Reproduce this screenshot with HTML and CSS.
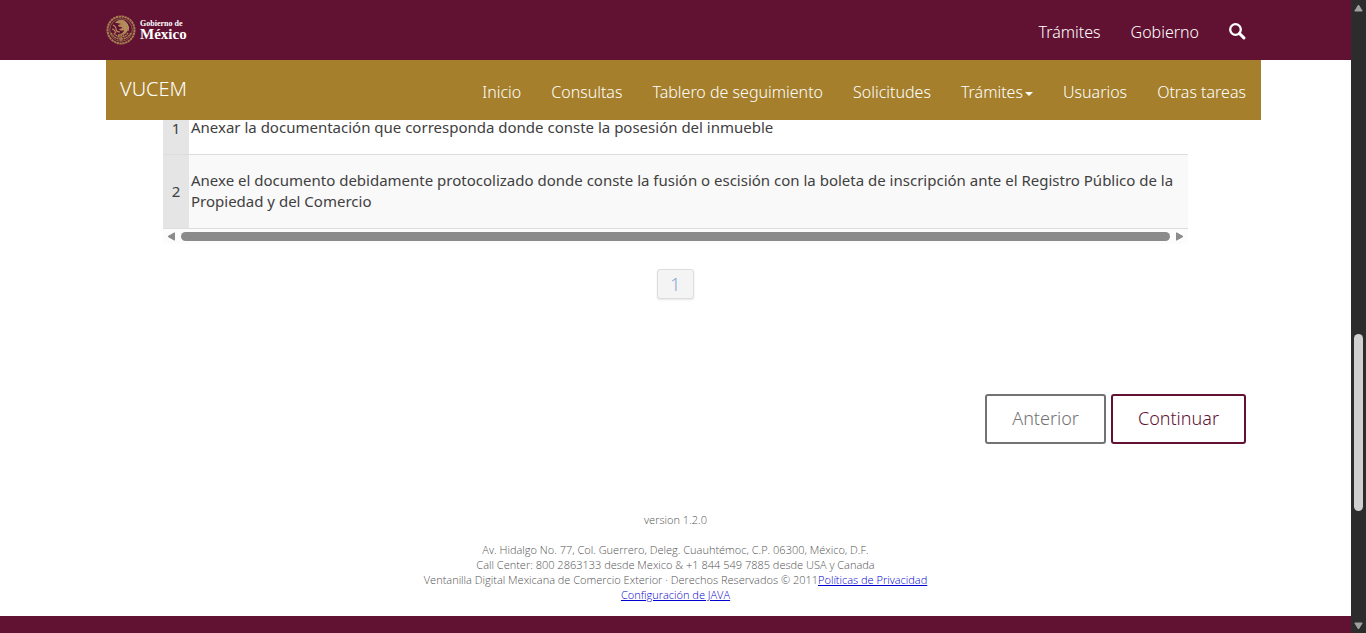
FILE: index.html
```html
<!DOCTYPE html>
<html lang="es">
<head>
<meta charset="utf-8">
<meta name="viewport" content="width=device-width, initial-scale=1">
<title>VUCEM</title>
<link rel="stylesheet" href="styles.css">
</head>
<body>
<div class="window">
  <div class="page">
    <header class="header">
      <div class="gov-bar shell">
        <div class="container gov-inner">
          <a class="logo" href="#" aria-label="Gobierno de México">
            <svg class="seal" viewBox="0 0 30 30" aria-hidden="true">
              <circle cx="15" cy="15" r="13.5" fill="none" stroke="#a57f4e" stroke-width="2" stroke-dasharray="2.4 .5"/>
              <circle cx="15" cy="15" r="11.3" fill="none" stroke="#8c6046" stroke-width="1"/>
              <path d="M9 8c3-4 9-4 11-1 3 3 3 8 0 11-2 2-5 2-7 1 3 0 5-2 5-4-2 1-4 1-5-1 2 0 3-1 3-2-2 0-4 0-4-2l3-1c-2-1-4-1-6-1z" fill="#b08a58"/>
              <path d="M7 10c2 1 3 2 3 4s2 3 4 3M6 14c2 0 3 2 4 4M20 8c2 2 3 5 2 8M17 7c2 2 3 5 2 9" fill="none" stroke="#b9925f" stroke-width="1.1"/>
              <path d="M5 18c3 5 7 6 10 6s7-1 10-6M8 18c2 3 5 4 7 4s5-1 7-4M12 20h6M15 19v7" fill="none" stroke="#a57f4e" stroke-width="1.5" stroke-dasharray="2 .5"/>
            </svg>
            <span class="wordmark"><span class="wordmark-top">Gobierno de</span><span class="wordmark-main">México</span></span>
          </a>
          <nav class="nav" aria-label="Gobierno">
            <a href="#">Trámites</a>
            <a href="#">Gobierno</a>
            <a class="search" href="#" aria-label="Buscar">
              <svg viewBox="0 0 17 17" aria-hidden="true"><circle cx="6.5" cy="6.5" r="5.3" fill="none" stroke="#fff" stroke-width="2.3"/><path d="M10.5 10.5l4.4 4.4" stroke="#fff" stroke-width="3" stroke-linecap="round"/></svg>
            </a>
          </nav>
        </div>
      </div>
      <div class="shell">
        <div class="container app-bar">
          <a class="brand" href="#">VUCEM</a>
          <nav class="nav" aria-label="VUCEM">
            <a href="#">Inicio</a>
            <a href="#">Consultas</a>
            <a href="#">Tablero de seguimiento</a>
            <a href="#">Solicitudes</a>
            <a href="#">Trámites<span class="caret"></span></a>
            <a href="#">Usuarios</a>
            <a href="#">Otras tareas</a>
          </nav>
        </div>
      </div>
    </header>

    <main class="shell content">
      <div class="container">
        <div class="grid">
          <table class="table">
            <tbody>
              <tr><th scope="row">1</th><td>Anexar la documentación que corresponda donde conste la posesión del inmueble</td></tr>
              <tr><th scope="row">2</th><td>Anexe el documento debidamente protocolizado donde conste la fusión o escisión con la boleta de inscripción ante el Registro Público de la Propiedad y del Comercio</td></tr>
            </tbody>
          </table>
          <div class="hscroll" aria-hidden="true">
            <svg class="arrow" viewBox="0 0 9 9"><path d="M7.5.8v7.4L1 4.5z" fill="#8b8b8b" stroke="#8b8b8b" stroke-linejoin="round"/></svg>
            <span class="hthumb"></span>
            <svg class="arrow" viewBox="0 0 9 9"><path d="M1.5.8v7.4L8 4.5z" fill="#8b8b8b" stroke="#8b8b8b" stroke-linejoin="round"/></svg>
          </div>
        </div>
        <div class="pager"><button class="page-button" type="button">1</button></div>
        <div class="actions">
          <button class="button" type="button">Anterior</button>
          <button class="button button-primary" type="button">Continuar</button>
        </div>
      </div>
    </main>

    <footer class="info">
      <p class="version">version 1.2.0</p>
      <p>Av. Hidalgo No. 77, Col. Guerrero, Deleg. Cuauhtémoc, C.P. 06300, México, D.F.<br>
      Call Center: 800 2863133 desde Mexico &amp; +1 844 549 7885 desde USA y Canada<br>
      Ventanilla Digital Mexicana de Comercio Exterior · Derechos Reservados © 2011<a href="#">Políticas de Privacidad</a><br>
      <a href="#">Configuración de JAVA</a></p>
    </footer>
    <div class="footer-band"></div>
  </div>
  <div class="vscroll" aria-hidden="true">
    <svg class="arrow" viewBox="0 0 9 9"><path d="M.8 7L4.5 1 8.2 7z" fill="#a0a0a0" stroke="#a0a0a0" stroke-linejoin="round"/></svg>
    <div class="vtrack"><span class="vthumb"></span></div>
    <svg class="arrow" viewBox="0 0 9 9"><path d="M.8 2L4.5 8 8.2 2z" fill="#a0a0a0" stroke="#a0a0a0" stroke-linejoin="round"/></svg>
  </div>
</div>
</body>
</html>
```

FILE: styles.css
```css
* { box-sizing: border-box; }

body {
  margin: 0;
  background: #fff;
  color: #404041;
  font-family: "Noto Sans", sans-serif;
  font-size: 15px;
}

.window {
  display: grid;
  grid-template-columns: minmax(0, 1fr) 15px;
  height: 100vh;
  overflow: hidden;
}

.page {
  display: flex;
  flex-direction: column;
  min-height: 100vh;
}

/* Balances the scrollbar so the container is centred in the window. */
.shell { padding-left: 16px; }

.container {
  max-width: 1155px;
  margin: 0 auto;
}

/* Header */
.header {
  position: relative;
  z-index: 1;
}

.gov-bar { background: #611232; }

.gov-inner,
.app-bar {
  display: flex;
  justify-content: space-between;
  height: 60px;
}

.logo {
  display: flex;
  align-items: center;
  gap: 4px;
  padding-bottom: 1px;
  color: #fff;
  text-decoration: none;
}

.seal {
  width: 30px;
  height: 30px;
}

.wordmark {
  display: flex;
  flex-direction: column;
  font-family: "Liberation Serif", serif;
  font-weight: 700;
}

.wordmark-top {
  font-size: 8px;
  line-height: 9px;
}

.wordmark-main {
  font-size: 15px;
  line-height: 12px;
}

.nav {
  display: flex;
  gap: 30px;
  padding: 20px 15px 0 0;
  font-size: 16px;
  font-weight: 300;
  line-height: 24px;
}

.nav a {
  color: #fff;
  text-decoration: none;
}

.search svg {
  display: block;
  width: 17px;
  height: 17px;
  margin-top: 3px;
}

.app-bar { background: #a57f2c; }

.brand {
  padding: 15px 14px;
  color: #fff;
  font-size: 20px;
  font-weight: 300;
  line-height: 28px;
  text-decoration: none;
}

.caret {
  display: inline-block;
  margin-left: 2px;
  border: 4px solid transparent;
  border-top-color: #fff;
  border-bottom: 0;
  vertical-align: middle;
}

/* Content, scrolled partly under the header */
.content { margin-top: -18px; }

.grid { margin: 0 73px 0 57px; }

.table {
  width: 100%;
  border-collapse: separate;
  border-spacing: 0;
  line-height: 21px;
}

.table th,
.table td {
  border-bottom: 1px solid #ddd;
}

.table th {
  width: 26px;
  padding: 0;
  background: #e5e5e5;
  font-weight: 400;
}

.table td { padding: 15px 2px 16px; }

.table tr:nth-child(even) td { background: #f9f9f9; }

.hscroll {
  display: flex;
  align-items: center;
  gap: 5px;
  height: 15px;
  padding: 0 4px;
  background: #fcfcfc;
}

.arrow {
  flex: none;
  width: 9px;
  height: 9px;
}

.hthumb {
  flex: 1;
  height: 9px;
  border-radius: 5px;
  background: #8b8b8b;
}

.pager {
  display: flex;
  justify-content: center;
  padding: 25px 16px 0 0;
}

.page-button {
  width: 37px;
  height: 30px;
  padding: 0;
  border: 1px solid #ddd;
  border-radius: 3px;
  background: #f4f4f4;
  box-shadow: 0 1px 2px rgba(0, 0, 0, .1);
  color: #7fa8d4;
  font: 300 18px/26px "Noto Sans", sans-serif;
}

.actions {
  display: flex;
  justify-content: flex-end;
  gap: 5px;
  padding: 95px 15px 0 0;
}

.button {
  padding: 9px 25px 11px;
  border: 2px solid #727374;
  border-radius: 3px;
  background: #fff;
  color: #727374;
  font: 300 18px/26px "Noto Sans", sans-serif;
}

.button-primary {
  border-color: #611232;
  color: #611232;
}

/* Footer */
.info {
  padding: 68px 0 14px;
  color: #545454;
  font-family: "Open Sans", "Noto Sans", sans-serif;
  font-size: 11px;
  font-weight: 300;
  line-height: 15px;
  text-align: center;
}

.info p { margin: 0; }

.info .version { margin-bottom: 15px; }

.info a { color: #0000d0; }

.footer-band {
  flex: 1;
  background: #611232;
}

/* Window scrollbar */
.vscroll {
  display: flex;
  flex-direction: column;
  align-items: center;
  gap: 6px;
  padding: 4px 0 3px;
  background: #2c2c2c;
}

.vtrack {
  display: flex;
  flex: 1;
  flex-direction: column;
  width: 9px;
}

.vtrack::before {
  flex: 315;
  content: "";
}

.vtrack::after {
  flex: 104;
  content: "";
}

.vthumb {
  flex: 177;
  border-radius: 5px;
  background: #d0d0d0;
}
```
